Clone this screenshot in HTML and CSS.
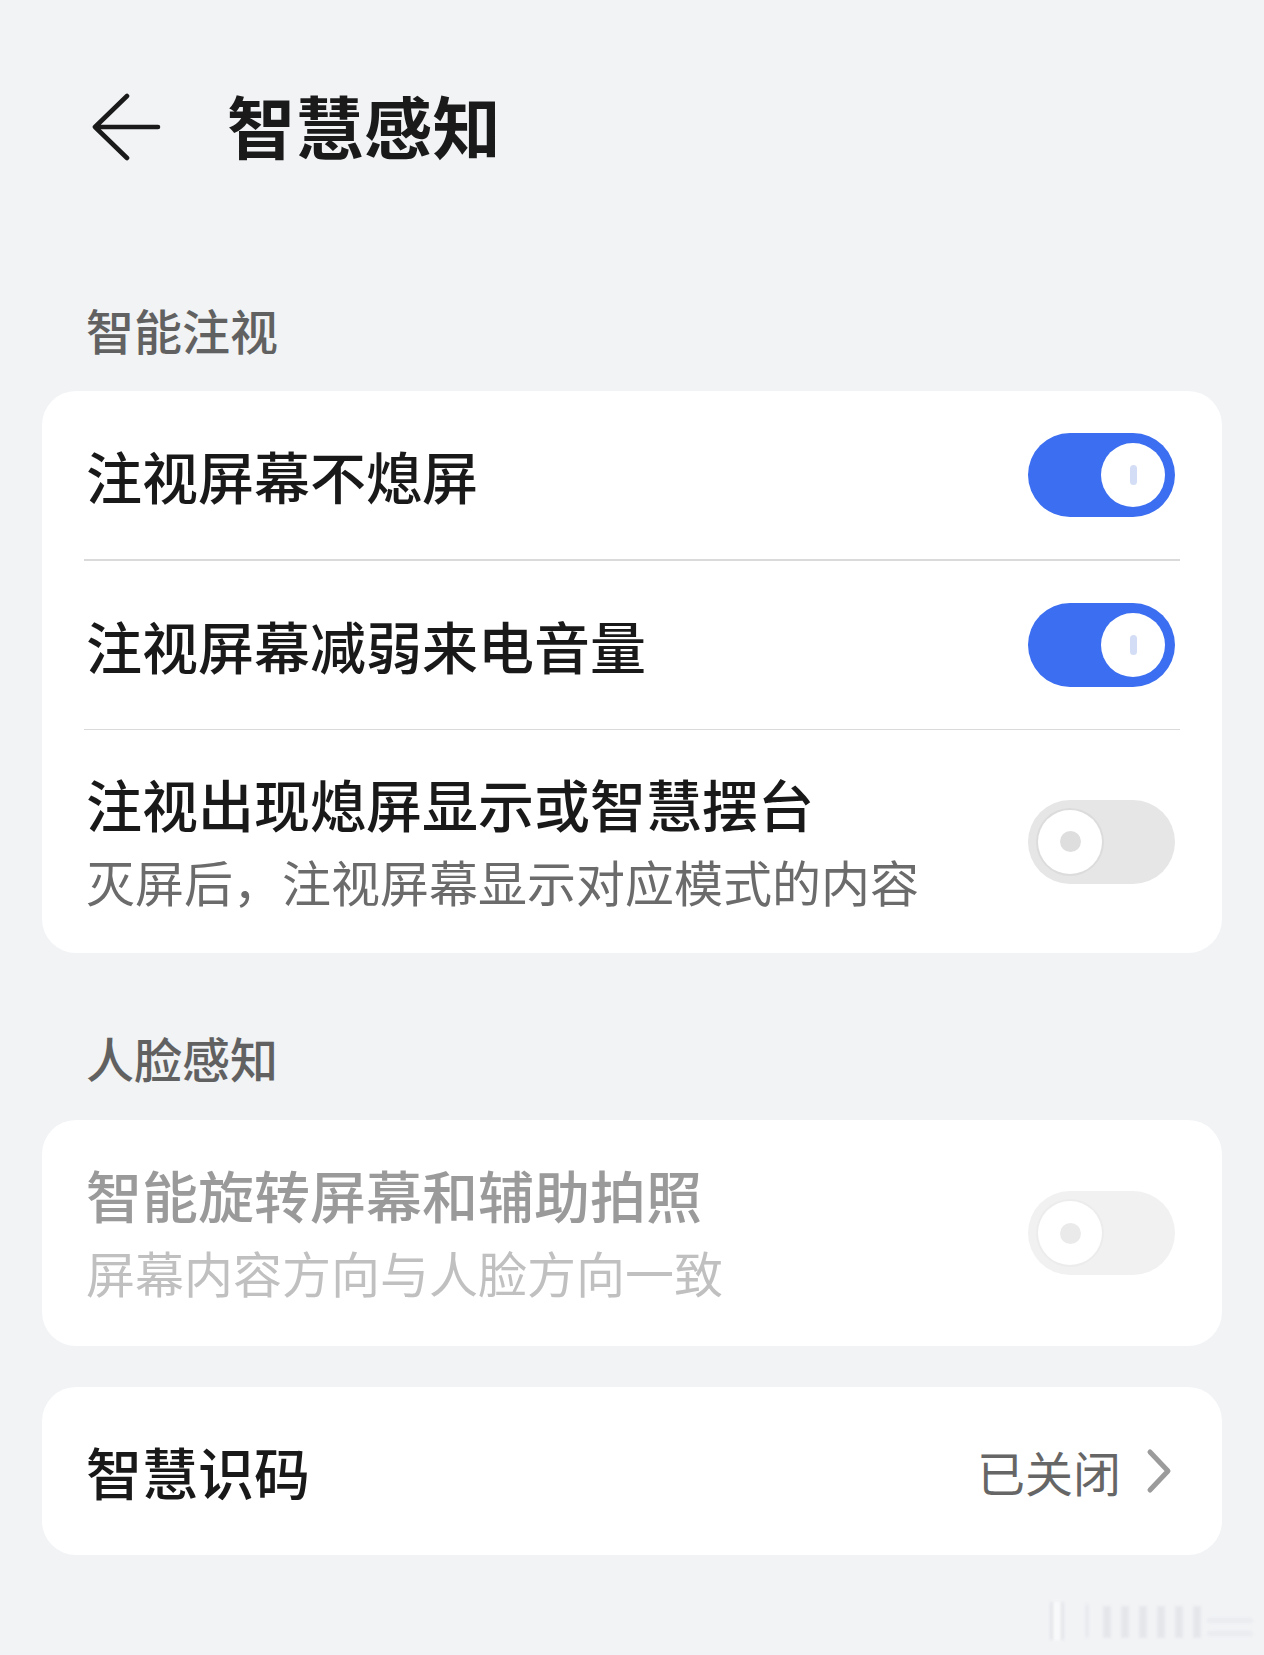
FILE: index.html
```html
<!DOCTYPE html>
<html lang="zh-CN">
<head>
    <meta charset="UTF-8">
    <meta name="viewport" content="width=device-width, initial-scale=1.0">
    <title>智慧感知</title>
    <link rel="stylesheet" href="styles.css">
</head>
<body>
    <div class="page">
        <div class="header">
            <svg class="back" width="72" height="68" viewBox="0 0 72 68">
                <path d="M36 3 L4 34 L36 65 M4 34 L67 34" fill="none" stroke="#1a1a1a" stroke-width="4.6" stroke-linecap="round" stroke-linejoin="round"/>
            </svg>
            <h1>智慧感知</h1>
        </div>

        <div class="section-title first">智能注视</div>
        <div class="card">
            <div class="row">
                <div class="row-text">
                    <div class="row-title">注视屏幕不熄屏</div>
                </div>
                <div class="switch on"><span class="knob"><i></i></span></div>
            </div>
            <div class="divider"></div>
            <div class="row">
                <div class="row-text">
                    <div class="row-title">注视屏幕减弱来电音量</div>
                </div>
                <div class="switch on"><span class="knob"><i></i></span></div>
            </div>
            <div class="divider"></div>
            <div class="row tall">
                <div class="row-text">
                    <div class="row-title">注视出现熄屏显示或智慧摆台</div>
                    <div class="row-sub">灭屏后，注视屏幕显示对应模式的内容</div>
                </div>
                <div class="switch off"><span class="knob"><i></i></span></div>
            </div>
        </div>

        <div class="section-title">人脸感知</div>
        <div class="card">
            <div class="row tall disabled">
                <div class="row-text">
                    <div class="row-title">智能旋转屏幕和辅助拍照</div>
                    <div class="row-sub">屏幕内容方向与人脸方向一致</div>
                </div>
                <div class="switch off"><span class="knob"><i></i></span></div>
            </div>
        </div>

        <div class="card last">
            <div class="row">
                <div class="row-text">
                    <div class="row-title">智慧识码</div>
                </div>
                <div class="row-value">
                    <span>已关闭</span>
                    <svg width="26" height="46" viewBox="0 0 26 46">
                        <path d="M4 4 L22 23 L4 42" fill="none" stroke="#9b9b9b" stroke-width="5" stroke-linecap="round" stroke-linejoin="round"/>
                    </svg>
                </div>
            </div>
        </div>
    </div>

    <svg class="watermark" width="210" height="46" viewBox="0 0 210 46">
        <rect x="3" y="4" width="14" height="38" fill="#ffffff"/>
        <rect x="3" y="4" width="3" height="38" fill="#d6d7dc"/>
        <rect x="14" y="4" width="3" height="38" fill="#d6d7dc"/>
        <rect x="38" y="6" width="4" height="34" fill="#e2e3e8"/>
        <rect x="56" y="8" width="8" height="32" fill="#dcdde2"/>
        <rect x="74" y="8" width="8" height="32" fill="#dcdde2"/>
        <rect x="92" y="8" width="8" height="32" fill="#dcdde2"/>
        <rect x="110" y="8" width="8" height="32" fill="#dcdde2"/>
        <rect x="128" y="8" width="8" height="32" fill="#dcdde2"/>
        <rect x="146" y="8" width="8" height="32" fill="#dcdde2"/>
        <rect x="160" y="20" width="46" height="5" rx="2.5" fill="#e4e5ea"/>
        <rect x="160" y="33" width="46" height="5" rx="2.5" fill="#e4e5ea"/>
    </svg>
</body>
</html>
```

FILE: styles.css
```css
body {
    margin: 0;
    padding: 0;
    background-color: #f1f3f5;
    font-family: "Noto Sans CJK SC", "Noto Sans", sans-serif;
    color: #1a1a1a;
}
.page {
    width: 1264px;
    min-height: 1655px;
    box-sizing: border-box;
    padding: 0 42px;
}
.header {
    height: 250px;
    display: flex;
    align-items: center;
}
.back {
    margin-left: 49px;
    margin-top: 4px;
}
h1 {
    margin: 0 0 0 64px;
    font-size: 68px;
    font-weight: 700;
    line-height: 80px;
    letter-spacing: 0.5px;
}
.section-title {
    margin: 80px 0 39px 44px;
    font-size: 48px;
    line-height: 48px;
    font-weight: 500;
    color: #616161;
}
.section-title.first {
    margin-top: 55px;
    margin-bottom: 38px;
}
.card {
    background: #ffffff;
    border-radius: 34px;
}
.card.last {
    margin-top: 41px;
}
.row {
    height: 168px;
    display: flex;
    align-items: center;
    justify-content: space-between;
    padding: 0 47px 0 44px;
}
.row.tall {
    height: 223px;
}
.row.tall.disabled {
    height: 226px;
}
.row-text {
    display: flex;
    flex-direction: column;
    gap: 14px;
}
.row-title {
    font-size: 56px;
    font-weight: 500;
    line-height: 64px;
    color: #191919;
}
.row-sub {
    font-size: 49px;
    line-height: 64px;
    color: #6b6b6b;
}
.row.disabled .row-title {
    color: #9a9a9a;
}
.row.disabled .row-sub {
    color: #c0c0c0;
}
.divider {
    height: 1.5px;
    margin: 0 42px;
    background: #dadada;
}
.switch {
    width: 147px;
    height: 84px;
    border-radius: 42px;
    box-sizing: border-box;
    padding: 10px;
    display: flex;
    flex-shrink: 0;
}
.switch .knob {
    width: 64px;
    height: 64px;
    border-radius: 50%;
    background: #ffffff;
    display: flex;
    align-items: center;
    justify-content: center;
}
.switch.on {
    background: #3b6ef0;
    justify-content: flex-end;
}
.switch.on .knob i {
    width: 7px;
    height: 20px;
    border-radius: 4px;
    background: #d3ddf5;
}
.switch.off {
    background: #e6e6e6;
    justify-content: flex-start;
}
.switch.off .knob {
    box-shadow: 0 0 0 2px #dcdcdc;
}
.switch.off .knob i {
    width: 21px;
    height: 21px;
    border-radius: 50%;
    background: #dedede;
}
.row.disabled .switch.off {
    background: #f1f1f1;
}
.row.disabled .switch.off .knob {
    box-shadow: 0 0 0 2px #ececec;
}
.row.disabled .switch.off .knob i {
    background: #eaeaea;
}
.row-value {
    display: flex;
    align-items: center;
    gap: 25px;
    margin-right: 3px;
    font-size: 48px;
    line-height: 64px;
    color: #666666;
}
.watermark {
    position: absolute;
    left: 1047px;
    top: 1598px;
    opacity: 0.55;
    filter: blur(1.5px);
}
```
